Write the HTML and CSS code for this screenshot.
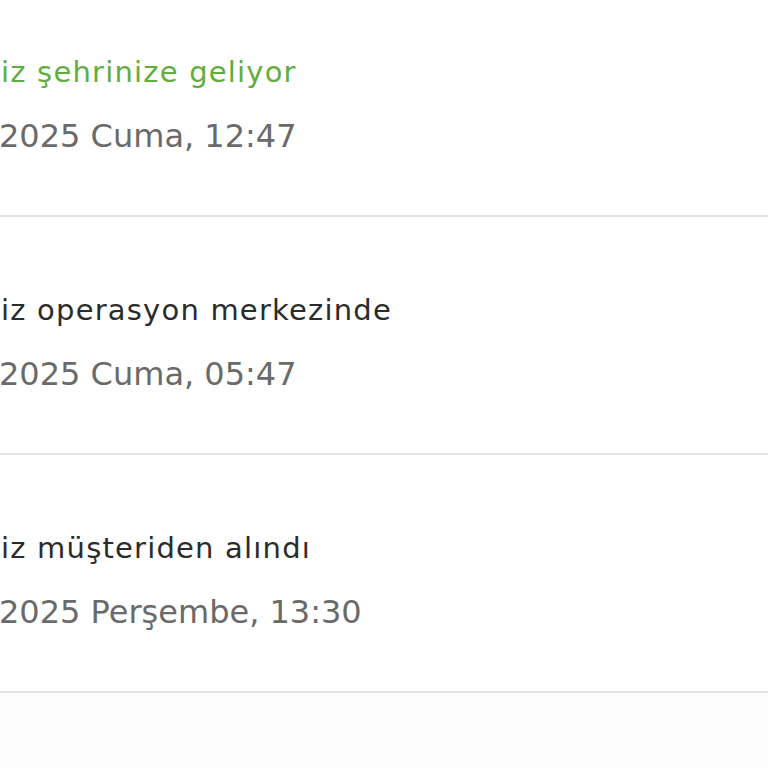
FILE: index.html
```html
<!DOCTYPE html>
<html lang="tr">
<head>
    <meta charset="UTF-8">
    <meta name="viewport" content="width=device-width, initial-scale=1.0">
    <title>Kargo Takip</title>
    <link rel="stylesheet" href="styles.css">
</head>
<body>

    <!-- Tracking timeline -->
    <div class="timeline">
        <div class="step current">
            <div class="step-title">iz şehrinize geliyor</div>
            <div class="step-date">2025 Cuma, 12:47</div>
        </div>
        <div class="step">
            <div class="step-title">iz operasyon merkezinde</div>
            <div class="step-date">2025 Cuma, 05:47</div>
        </div>
        <div class="step">
            <div class="step-title">iz müşteriden alındı</div>
            <div class="step-date">2025 Perşembe, 13:30</div>
        </div>
    </div>

</body>
</html>
```

FILE: styles.css
```css
/* General Reset */
* {
    margin: 0;
    padding: 0;
    box-sizing: border-box;
}

body {
    font-family: "DejaVu Sans", sans-serif;
    background: #fdfdfd;
    color: #333;
    overflow: hidden;
}

/* Timeline */
.timeline {
    margin-top: -21px;
    background: #fff;
}

.step {
    height: 238px;
    padding-top: 76px;
    border-bottom: 2px solid #e3e3e3;
}

.step-title {
    font-size: 29px;
    line-height: 34px;
    letter-spacing: 1.2px;
    color: #2b2b2b;
    margin-left: 1px;
}

.step.current .step-title {
    color: #62ad3f;
}

.step-date {
    font-size: 32px;
    line-height: 36px;
    margin-top: 29px;
    margin-left: -1px;
    color: #6a6a6a;
}
```
